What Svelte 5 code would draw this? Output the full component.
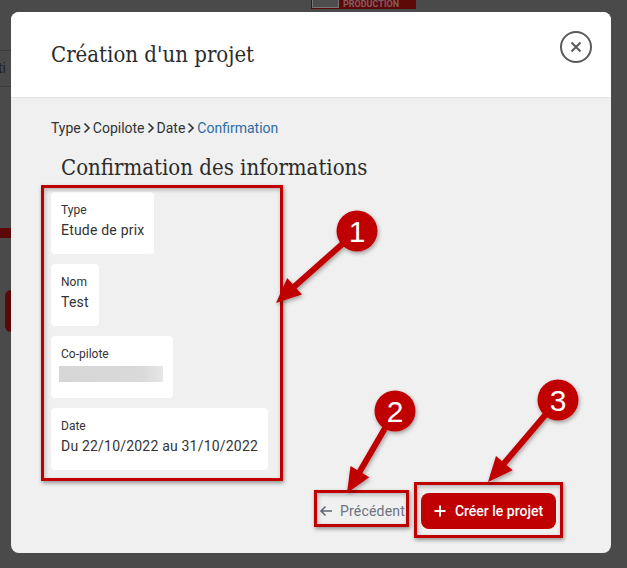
<script>
	const fields = [
		{ label: 'Type', value: 'Etude de prix' },
		{ label: 'Nom', value: 'Test' },
		{ label: 'Co-pilote', hidden: true },
		{ label: 'Date', value: 'Du 22/10/2022 au 31/10/2022' }
	];
	const steps = ['Type', 'Copilote', 'Date'];
	const callouts = [
		{ n: 1, cx: 357, cy: 231, x2: 276, y2: 303, bx: 335, by: 250 },
		{ n: 2, cx: 395, cy: 411, x2: 347, y2: 493, bx: 385, by: 430 },
		{ n: 3, cx: 558, cy: 400, x2: 488, y2: 482, bx: 545, by: 416 }
	];

	// arrow head polygon pointing at (x2, y2), coming from (bx, by)
	function head(c) {
		const a = Math.atan2(c.y2 - c.by, c.x2 - c.bx);
		const l = 25;
		const w = 11;
		const px = c.x2 - l * Math.cos(a);
		const py = c.y2 - l * Math.sin(a);
		const nx = -Math.sin(a) * w;
		const ny = Math.cos(a) * w;
		return `${c.x2},${c.y2} ${px + nx},${py + ny} ${px - nx},${py - ny}`;
	}
</script>

<div class="page">
	<div class="backdrop">
		<div class="logo"><span class="logo-box"></span><span class="logo-text">PRODUCTION</span></div>
		<div class="tab">ti</div>
		<div class="blob one"></div>
		<div class="blob two"></div>
	</div>

	<div class="modal">
		<header>
			<h1>Création d'un projet</h1>
			<button class="close" aria-label="Fermer">
				<svg width="14" height="14" viewBox="0 0 14 14"><path d="M2.5 2.5l9 9M11.5 2.5l-9 9" /></svg>
			</button>
		</header>

		<div class="body">
			<nav>
				{#each steps as step}
					<span>{step}</span>
					<svg width="10" height="12" viewBox="0 0 10 12"><path d="M2.5 1.5l4.5 4.5-4.5 4.5" /></svg>
				{/each}
				<span class="current">Confirmation</span>
			</nav>

			<h2>Confirmation des informations</h2>

			<div class="fields">
				{#each fields as field}
					<div class="card">
						<div class="label">{field.label}</div>
						{#if field.hidden}
							<div class="blur"></div>
						{:else}
							<div class="value">{field.value}</div>
						{/if}
					</div>
				{/each}
			</div>

			<div class="actions">
				<button class="back">
					<svg width="14" height="12" viewBox="0 0 14 12"><path d="M13 6H2M6.5 1.5L2 6l4.5 4.5" /></svg>
					Précédent
				</button>
				<button class="create">
					<svg width="12" height="12" viewBox="0 0 12 12"><path d="M6 0.5v11M0.5 6h11" /></svg>
					Créer le projet
				</button>
			</div>
		</div>
	</div>

	<div class="frame f1"></div>
	<div class="frame f2"></div>
	<div class="frame f3"></div>

	<svg class="arrows" width="627" height="568" viewBox="0 0 627 568">
		<defs>
			<filter id="sh" x="-30%" y="-30%" width="160%" height="160%">
				<feDropShadow dx="1" dy="2" stdDeviation="2" flood-color="#000" flood-opacity="0.35" />
			</filter>
		</defs>
		{#each callouts as c}
			<g filter="url(#sh)">
				<line x1={c.cx} y1={c.cy} x2={(c.x2 * 3 + c.bx) / 4} y2={(c.y2 * 3 + c.by) / 4} stroke="#c00000" stroke-width="6" />
				<polygon points={head(c)} fill="#c00000" />
				<circle cx={c.cx} cy={c.cy} r="20.5" fill="#c00000" />
			</g>
			<text x={c.cx} y={c.cy + 11} text-anchor="middle">{c.n}</text>
		{/each}
	</svg>
</div>

<style>
	:global(body) {
		margin: 0;
		background: #4a4a4a;
	}

	.page {
		position: relative;
		width: 627px;
		height: 568px;
		overflow: hidden;
		background: #4a4a4a;
		font-family: Roboto, sans-serif;
	}

	.backdrop {
		position: absolute;
		inset: 0;
	}

	.logo {
		position: absolute;
		left: 311px;
		top: 0;
		width: 105px;
		height: 9px;
		background: #5c0808;
		display: flex;
	}

	.logo-box {
		width: 25px;
		height: 7px;
		margin-left: 1px;
		background: #4d4d4d;
		border: 1px solid #777;
		border-top: 0;
	}

	.logo-text {
		margin-left: 4px;
		font-size: 9px;
		line-height: 9px;
		font-weight: 700;
		color: #806060;
	}

	.tab {
		position: absolute;
		left: -2px;
		top: 50px;
		width: 20px;
		height: 35px;
		border-top: 1px solid #3c3c3c;
		border-bottom: 1px solid #3c3c3c;
		font-size: 14px;
		line-height: 35px;
		color: #222;
	}

	.blob {
		position: absolute;
		background: #5c0808;
	}

	.blob.one {
		left: 0;
		top: 228px;
		width: 11px;
		height: 10px;
	}

	.blob.two {
		left: 5px;
		top: 290px;
		width: 6px;
		height: 42px;
		border-radius: 6px 0 0 6px;
	}

	.modal {
		position: absolute;
		left: 11px;
		top: 12px;
		width: 600px;
		height: 541px;
		border-radius: 8px;
		overflow: hidden;
		background: #f0f0f0;
		display: flex;
		flex-direction: column;
	}

	header {
		height: 86px;
		flex: none;
		box-sizing: border-box;
		background: #fff;
		border-bottom: 1px solid #e4e4e4;
		padding: 0 19px 0 40px;
		display: flex;
		justify-content: space-between;
	}

	h1 {
		margin: 25px 0 0;
		font-family: 'DejaVu Serif Condensed', 'DejaVu Serif', serif;
		font-weight: 400;
		font-size: 22px;
		line-height: 36px;
		color: #2b2b2b;
	}

	.close {
		margin-top: 19px;
		width: 32px;
		height: 32px;
		padding: 0;
		box-sizing: border-box;
		border: 2px solid #5a5a5a;
		border-radius: 50%;
		background: #fff;
		display: flex;
		align-items: center;
		justify-content: center;
	}

	.close path {
		fill: none;
		stroke: #5a5a5a;
		stroke-width: 2;
	}

	.body {
		flex: 1;
		padding: 21px 40px 0;
		position: relative;
	}

	nav {
		display: flex;
		align-items: center;
		gap: 1px;
		font-size: 14px;
		line-height: 18px;
		color: #333;
	}

	nav svg path {
		fill: none;
		stroke: #333;
		stroke-width: 1.7;
	}

	.current {
		color: #2d6da3;
	}

	h2 {
		margin: 14px 0 0 10px;
		font-family: 'DejaVu Serif Condensed', 'DejaVu Serif', serif;
		font-weight: 400;
		font-size: 22px;
		line-height: 34px;
		color: #2b2b2b;
	}

	.fields {
		margin-top: 7px;
		display: flex;
		flex-direction: column;
		align-items: flex-start;
		gap: 10px;
	}

	.card {
		box-sizing: border-box;
		height: 62px;
		padding: 10px 10px 0;
		background: #fff;
		border-radius: 4px;
		color: #333;
	}

	.label {
		font-size: 12px;
		line-height: 16px;
	}

	.value {
		margin-top: 2px;
		font-size: 14px;
		line-height: 20px;
		letter-spacing: 0.2px;
	}

	.blur {
		width: 104px;
		height: 16px;
		margin: 4px 0 0 -2px;
		background: linear-gradient(90deg, #d6d6d6, #dadada 80%, #e6e6e6);
	}

	.actions {
		position: absolute;
		right: 55px;
		top: 395px;
		display: flex;
		align-items: center;
		gap: 16px;
	}

	button {
		font-family: Roboto, sans-serif;
		cursor: pointer;
	}

	.back {
		border: 0;
		background: none;
		padding: 0;
		font-size: 14px;
		color: #6b7280;
		display: flex;
		align-items: center;
		gap: 7px;
		letter-spacing: 0.2px;
	}

	.back path {
		fill: none;
		stroke: #5f6570;
		stroke-width: 1.5;
	}

	.create {
		width: 135px;
		height: 36px;
		border: 0;
		border-radius: 8px;
		background: #c00000;
		color: #fff;
		font-size: 14px;
		font-weight: 500;
		display: flex;
		align-items: center;
		justify-content: center;
		gap: 9px;
	}

	.create path {
		stroke: #fff;
		stroke-width: 2;
	}

	.frame {
		position: absolute;
		box-sizing: border-box;
		border: 3px solid #c00000;
		box-shadow: 1px 2px 4px rgba(0, 0, 0, 0.4), inset 1px 2px 4px rgba(0, 0, 0, 0.25);
	}

	.f1 {
		left: 41px;
		top: 185px;
		width: 242px;
		height: 296px;
	}

	.f2 {
		left: 314px;
		top: 490px;
		width: 95px;
		height: 37px;
	}

	.f3 {
		left: 414px;
		top: 482px;
		width: 149px;
		height: 56px;
	}

	.arrows {
		position: absolute;
		left: 0;
		top: 0;
	}

	.arrows text {
		font-family: 'Liberation Sans', sans-serif;
		font-size: 30px;
		fill: #fff;
	}
</style>
